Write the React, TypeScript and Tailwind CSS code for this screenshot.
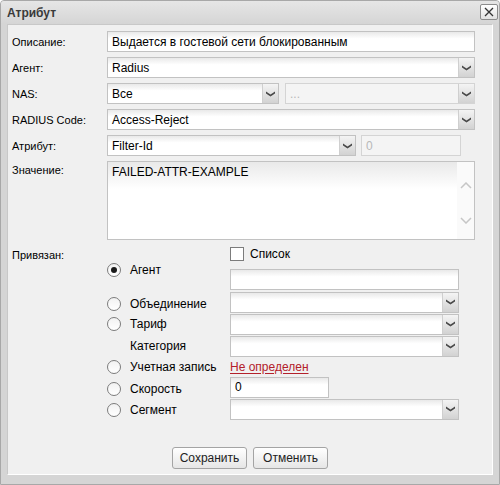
import React from 'react';

const Chevron = () => (
  <svg width="9" height="6" viewBox="0 0 9 6">
    <path d="M0 0.5 L4.5 3.5 L9 0.5 L9 2.5 L4.5 5.5 L0 2.5 Z" fill="#4a4a4a" />
  </svg>
);

const fieldBg = 'bg-linear-to-b from-[#e9e9e9] via-white via-[35%] to-white';

function TextInput({ value, className = '' }: { value?: string; className?: string }) {
  return (
    <div className={`h-[21px] border border-[#c2c2c2] ${fieldBg} pl-[4px] flex items-center text-black ${className}`}>
      {value}
    </div>
  );
}

function Select({ value, className = '', disabled = false }: { value?: string; className?: string; disabled?: boolean }) {
  return (
    <div className={`h-[21px] flex border ${disabled ? 'border-[#d4d4d4]' : 'border-[#c2c2c2]'} ${className}`}>
      <div className={`flex-1 pl-[4px] flex items-center ${disabled ? 'bg-[#f4f4f4] text-[#b8b8b8]' : `${fieldBg} text-black`}`}>
        {value}
      </div>
      <div className="w-[16px] border-l border-[#cfcfcf] bg-linear-to-b from-[#f4f4f4] to-[#d2d2d2] flex items-center justify-center">
        <Chevron />
      </div>
    </div>
  );
}

function Radio({ checked = false }: { checked?: boolean }) {
  return (
    <div className="w-[14px] h-[14px] rounded-full border border-[#7c7c7c] bg-linear-to-b from-[#f2f2f2] to-white flex items-center justify-center shrink-0">
      {checked && <div className="w-[6px] h-[6px] rounded-full bg-[#1a1a1a]" />}
    </div>
  );
}

function Row({ label, children }: { label: string; children: React.ReactNode }) {
  return (
    <div className="flex items-center h-[21px]">
      <div className="w-[95px] shrink-0 text-black text-[11px]">{label}</div>
      {children}
    </div>
  );
}

export default function App() {
  return (
    <div className="w-[500px] h-[485px] bg-[#d5d5d5] border border-[#a8a8a8] rounded-t-[4px] flex flex-col font-['Liberation_Sans',Arial,sans-serif] text-[12px] leading-[14px] overflow-hidden">
      <div className="h-[23px] shrink-0 flex items-center justify-between pl-[6px] pr-[1px] bg-linear-to-b from-[#e6e6e6] to-[#d5d5d5]">
        <span className="font-bold text-[#3a3a3a]">Атрибут</span>
        <div className="w-[18px] h-[16px] mt-[-2px] rounded-[2px] border border-[#8c8c8c] bg-linear-to-b from-white to-[#e2e2e2] flex items-center justify-center">
          <svg width="10" height="10" viewBox="0 0 10 10">
            <path d="M1 1 L9 9 M9 1 L1 9" stroke="#333" strokeWidth="1.3" />
          </svg>
        </div>
      </div>

      <div className="flex-1 mx-[6px] mb-[9px] bg-[#f0f0f0] border border-t-[#c8c8c8] border-l-[#c8c8c8] border-r-white border-b-white flex flex-col">
        <div className="pl-[4px] pt-[6px] flex flex-col gap-[5px]">
          <Row label="Описание:">
            <TextInput value="Выдается в гостевой сети блокированным" className="w-[368px]" />
          </Row>
          <Row label="Агент:">
            <Select value="Radius" className="w-[368px]" />
          </Row>
          <Row label="NAS:">
            <Select value="Все" className="w-[172px]" />
            <Select value="..." disabled className="w-[190px] ml-[6px]" />
          </Row>
          <Row label="RADIUS Code:">
            <Select value="Access-Reject" className="w-[368px]" />
          </Row>
          <Row label="Атрибут:">
            <Select value="Filter-Id" className="w-[249px]" />
            <div className="w-[100px] h-[21px] ml-[5px] border border-[#d4d4d4] bg-[#f4f4f4] text-[#b8b8b8] pl-[4px] flex items-center">0</div>
          </Row>
          <div className="flex items-start">
            <div className="w-[95px] shrink-0 text-black text-[11px] pt-[2px]">Значение:</div>
            <div className="w-[368px] h-[79px] border border-[#c2c2c2] bg-white flex">
              <div className={`flex-1 pl-[4px] pt-[3px] text-black ${fieldBg}`}>FAILED-ATTR-EXAMPLE</div>
              <div className="w-[17px] bg-[#fafafa] flex flex-col items-center justify-between pt-[20px] pb-[15px]">
                <svg width="12" height="7" viewBox="0 0 12 7">
                  <path d="M1 6 L6 1 L11 6" stroke="#c6c6c6" strokeWidth="1.5" fill="none" />
                </svg>
                <svg width="12" height="7" viewBox="0 0 12 7">
                  <path d="M1 1 L6 6 L11 1" stroke="#c6c6c6" strokeWidth="1.5" fill="none" />
                </svg>
              </div>
            </div>
          </div>
        </div>

        <div className="pl-[4px] flex">
          <div className="w-[95px] shrink-0 text-black text-[11px] pt-[8px]">Привязан:</div>
          <div className="flex flex-col">
            <div className="h-[14px] mt-[7px] flex items-center pl-[123px]">
              <div className="w-[14px] h-[14px] border border-[#7c7c7c] bg-white" />
              <span className="ml-[6px] text-black">Список</span>
            </div>
            <div className="h-[29px] mt-[1px] flex items-start">
              <div className="w-[123px] flex items-center mt-[1px]">
                <Radio checked />
                <span className="ml-[9px] text-black">Агент</span>
              </div>
              <TextInput className="w-[229px] mt-[7px]" />
            </div>
            <div className="h-[22px] flex items-center">
              <div className="w-[123px] flex items-center mt-[3px]">
                <Radio />
                <span className="ml-[9px] text-black">Объединение</span>
              </div>
              <Select className="w-[229px]" />
            </div>
            <div className="h-[22px] flex items-center">
              <div className="w-[123px] flex items-center">
                <Radio />
                <span className="ml-[9px] text-black">Тариф</span>
              </div>
              <Select className="w-[229px]" />
            </div>
            <div className="h-[22px] flex items-center">
              <div className="w-[123px] pl-[23px] text-black">Категория</div>
              <Select className="w-[229px]" />
            </div>
            <div className="h-[19px] flex items-center">
              <div className="w-[123px] flex items-center">
                <Radio />
                <span className="ml-[9px] text-black">Учетная запись</span>
              </div>
              <span className="text-[#b3202a] underline underline-offset-[2px]">Не определен</span>
            </div>
            <div className="h-[22px] flex items-center">
              <div className="w-[123px] flex items-center mt-[3px]">
                <Radio />
                <span className="ml-[9px] text-black">Скорость</span>
              </div>
              <TextInput value="0" className="w-[99px]" />
            </div>
            <div className="h-[22px] flex items-center">
              <div className="w-[123px] flex items-center mt-[2px]">
                <Radio />
                <span className="ml-[9px] text-black">Сегмент</span>
              </div>
              <Select className="w-[229px]" />
            </div>
          </div>
        </div>

        <div className="flex justify-center gap-[6px] mt-[27px]">
          <button className="w-[75px] h-[22px] rounded-[3px] border border-[#a4a4a4] bg-linear-to-b from-white to-[#e6e6e6] text-[#222]">Сохранить</button>
          <button className="w-[75px] h-[22px] rounded-[3px] border border-[#a4a4a4] bg-linear-to-b from-white to-[#e6e6e6] text-[#222]">Отменить</button>
        </div>
      </div>
    </div>
  );
}
